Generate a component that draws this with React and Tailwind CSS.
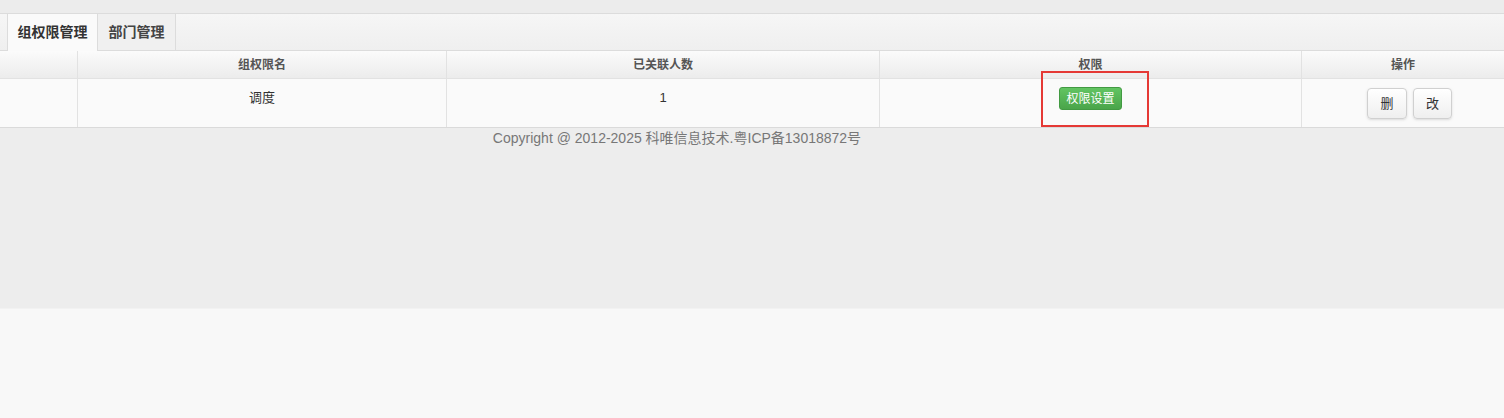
export default function App() {
  const font = { fontFamily: '"Liberation Sans", "Noto Sans CJK SC", sans-serif' };
  const cols = "grid grid-cols-[78px_369px_433px_422px_1fr]";

  return (
    <div className="w-[1504px] h-[418px] bg-[#f8f8f8] text-[#333]" style={font}>
      <div className="h-[14px] bg-[#ececec] border-b border-[#dcdcdc]" />
      <div className="h-[37px] bg-gradient-to-b from-[#f6f6f6] to-[#efefef] flex items-end pl-[7px] border-b border-[#dcdcdc]">
        <div className="h-[37px] w-[91px] bg-[#fafafa] border-x border-[#dcdcdc] flex items-center justify-center text-[14px] font-semibold text-[#333] -mb-px relative z-10">
          组权限管理
        </div>
        <div className="h-[36px] w-[78px] bg-[#f0f0f0] border-r border-[#dcdcdc] flex items-center justify-center text-[14px] font-semibold text-[#444] self-start">
          部门管理
        </div>
      </div>

      <div className="relative">
        <div className={`${cols} h-[28px] bg-gradient-to-b from-[#fbfbfb] to-[#ececec] border-b border-[#e2e2e2] text-[12px] font-semibold text-[#555]`}>
          <div className="border-r border-[#e2e2e2]" />
          <div className="border-r border-[#e2e2e2] flex items-center justify-center">组权限名</div>
          <div className="border-r border-[#e2e2e2] flex items-center justify-center">已关联人数</div>
          <div className="border-r border-[#e2e2e2] flex items-center justify-center">权限</div>
          <div className="flex items-center justify-center">操作</div>
        </div>
        <div className={`${cols} h-[49px] bg-[#fafafa] border-b border-[#dadada] text-[13px]`}>
          <div className="border-r border-[#e2e2e2]" />
          <div className="border-r border-[#e2e2e2] flex justify-center pt-[9px]">调度</div>
          <div className="border-r border-[#e2e2e2] flex justify-center pt-[9px]">1</div>
          <div className="border-r border-[#e2e2e2] flex justify-center pt-[8px]">
            <button className="h-[23px] px-[6px] rounded-[3px] bg-gradient-to-b from-[#62c462] to-[#4aa54a] border border-[#429a42] text-white text-[12px] leading-none">
              权限设置
            </button>
          </div>
          <div className="flex justify-center gap-[6px] pt-[9px] pl-[13px]">
            <button className="h-[31px] w-[40px] rounded-[4px] bg-gradient-to-b from-white to-[#efefef] border border-[#d0d0d0] shadow-sm text-[13px] text-[#333]">
              删
            </button>
            <button className="h-[31px] w-[39px] rounded-[4px] bg-gradient-to-b from-white to-[#efefef] border border-[#d0d0d0] shadow-sm text-[13px] text-[#333]">
              改
            </button>
          </div>
        </div>
        <div className="absolute left-[1041px] top-[20px] w-[108px] h-[56px] border-2 border-[#e53935]" />
      </div>

      <div className="h-[181px] bg-[#ededed] border-b border-[#f2f2f2]">
        <div className="w-[1354px] text-center text-[14px] text-[#777]">
          Copyright @ 2012-2025 科唯信息技术.粤ICP备13018872号
        </div>
      </div>
    </div>
  );
}
